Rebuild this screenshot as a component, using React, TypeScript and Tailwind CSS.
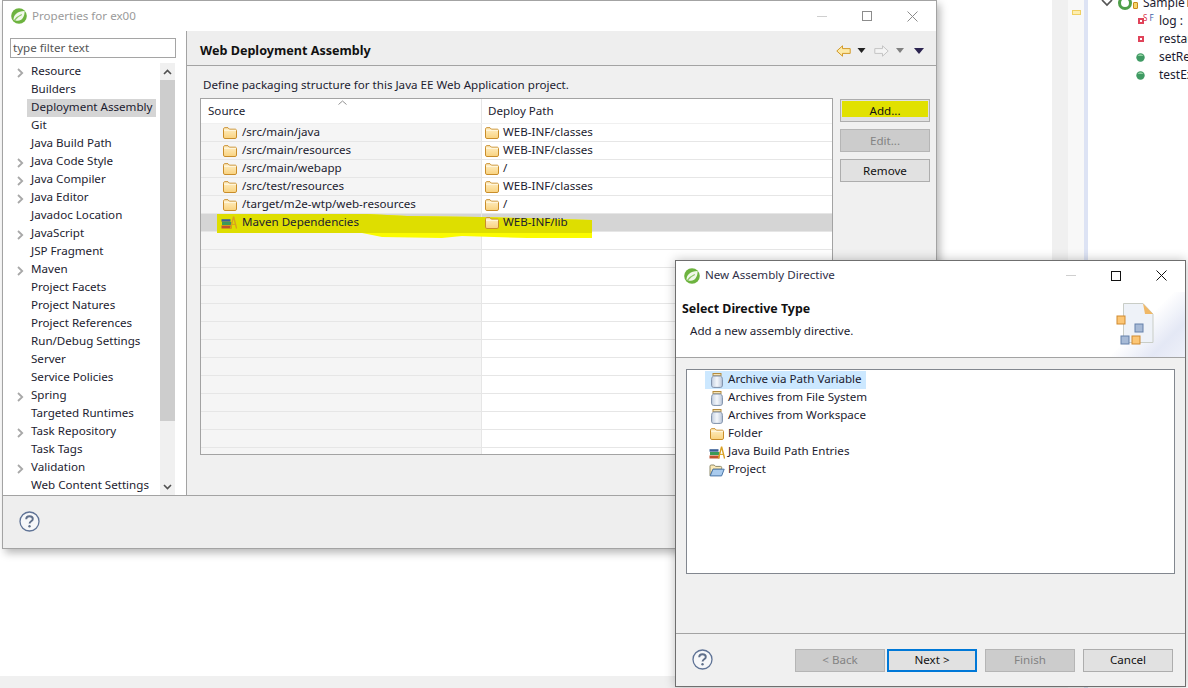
import React from "react";

const Spring = ({ size = 16 }: { size?: number }) => (
  <svg width={size} height={size} viewBox="0 0 16 16" className="shrink-0">
    <circle cx="8" cy="8" r="7.8" fill="#6db33f" />
    <path d="M2.6 12C2.2 7 6.4 3.2 13.6 3 13.8 8.8 10.8 13 6.6 12.8 5 12.7 3.8 11.8 2.6 12Z" fill="#f1f8ea" />
    <path d="M3.2 12.6C5.2 9.8 7.6 8 10.8 6.6" fill="none" stroke="#8cc665" strokeWidth="1.1" />
  </svg>
);

const Folder = () => (
  <svg width="14" height="12" viewBox="0 0 14 12" className="shrink-0">
    <defs>
      <linearGradient id="fg" x1="0" y1="0" x2="0" y2="1">
        <stop offset="0" stopColor="#fff0c8" />
        <stop offset="1" stopColor="#f9d27e" />
      </linearGradient>
    </defs>
    <path d="M.5 2.2C.5 1.2 1 .7 2 .7h3l1.4 1.5h5.6c1 0 1.5.5 1.5 1.4v6.5c0 .9-.5 1.4-1.4 1.4H1.9C1 11.5.5 11 .5 10.1Z" fill="url(#fg)" stroke="#c98d2a" />
    <path d="M1 3.3h12" stroke="#fff8e4" strokeWidth="1" />
  </svg>
);

const Jar = () => (
  <svg width="14" height="15" viewBox="0 0 14 15" className="shrink-0">
    <defs>
      <linearGradient id="jg" x1="0" y1="0" x2="1" y2="0">
        <stop offset="0" stopColor="#c3cfe0" />
        <stop offset=".5" stopColor="#f4f7fb" />
        <stop offset="1" stopColor="#b9c6da" />
      </linearGradient>
    </defs>
    <rect x="3" y=".5" width="8" height="2.4" fill="#f6e3b4" stroke="#b58b3c" />
    <path d="M3.4 3C2 4 1.6 5 1.6 6.4v5.8c0 1.4.8 2.2 2 2.2h6.8c1.2 0 2-.8 2-2.2V6.4C12.4 5 12 4 10.6 3Z" fill="url(#jg)" stroke="#7c8ea8" />
  </svg>
);

const Library = () => (
  <svg width="16" height="13" viewBox="0 0 16 13" className="shrink-0">
    <rect x=".5" y="9.5" width="10" height="3" fill="#c0522f" />
    <rect x="1" y="6" width="9.5" height="3" fill="#3b9a58" />
    <rect x=".5" y="3.2" width="9" height="2.5" fill="#3a5f96" />
    <path d="M9.5 12.5 12.6.6 15.6 12.5" fill="none" stroke="#d9a021" strokeWidth="1.4" />
    <path d="M10.6 8.4h4" stroke="#d9a021" />
  </svg>
);

const OpenFolder = () => (
  <svg width="16" height="13" viewBox="0 0 16 13" className="shrink-0">
    <path d="M1 11.5V2.2C1 1.4 1.4 1 2.2 1h3l1.3 1.4h5c.8 0 1.2.4 1.2 1.2v1.6H4L1.2 11.5Z" fill="#fbe9b7" stroke="#8f8a6a" />
    <path d="M1.2 11.9 4 5.2h11.2L12.6 11.9Z" fill="#a9cbee" stroke="#4c77a8" />
  </svg>
);

const Chevron = () => (
  <svg width="7" height="10" viewBox="0 0 7 10" className="mt-[2px] shrink-0">
    <path d="M1 1l4.2 4L1 9" fill="none" stroke="#a8a8a8" strokeWidth="1.8" />
  </svg>
);

const Help = ({ className = "" }: { className?: string }) => (
  <svg width="21" height="21" viewBox="0 0 21 21" className={`shrink-0 ${className}`}>
    <circle cx="10.5" cy="10.5" r="9.5" fill="#f6f7f9" stroke="#5f7396" strokeWidth="1.3" />
    <path d="M7.2 8.2c0-2 1.5-3 3.3-3s3.3 1 3.3 2.7c0 2.4-3.2 2.3-3.2 4.6" fill="none" stroke="#5f6f8a" strokeWidth="1.9" />
    <circle cx="10.5" cy="15.3" r="1.2" fill="#5f6f8a" />
  </svg>
);

const WinControls = ({ dark }: { dark: boolean }) => {
  const c = dark ? "#111111" : "#8c8c8c";
  return (
    <div className="flex items-center">
      <div className="h-px w-[10px] bg-[#cfcfcf]" />
      <div className={`ml-[35px] h-[10px] w-[10px] border ${dark ? "border-[#111111]" : "border-[#8c8c8c]"}`} />
      <svg width="11" height="11" viewBox="0 0 11 11" className="ml-[35px]">
        <path d="M.5.5l10 10M10.5.5l-10 10" stroke={c} strokeWidth="1" />
      </svg>
    </div>
  );
};

const Btn = ({ label, state = "normal", className = "" }: { label: string; state?: "normal" | "disabled" | "focus"; className?: string }) => (
  <div
    className={`relative flex h-[23px] w-[90px] shrink-0 items-center justify-center text-[11.6px] ${
      state === "disabled"
        ? "border border-[#b5b5b5] bg-[#cccccc] text-[#838383]"
        : state === "focus"
        ? "border-2 border-[#0078d7] bg-[#e1e1e1] text-[#111111]"
        : "border border-[#adadad] bg-[#e1e1e1] text-[#111111]"
    } ${className}`}
  >
    {label}
  </div>
);

const tree: [string, boolean][] = [
  ["Resource", true],
  ["Builders", false],
  ["Deployment Assembly", false],
  ["Git", false],
  ["Java Build Path", false],
  ["Java Code Style", true],
  ["Java Compiler", true],
  ["Java Editor", true],
  ["Javadoc Location", false],
  ["JavaScript", true],
  ["JSP Fragment", false],
  ["Maven", true],
  ["Project Facets", false],
  ["Project Natures", false],
  ["Project References", false],
  ["Run/Debug Settings", false],
  ["Server", false],
  ["Service Policies", false],
  ["Spring", true],
  ["Targeted Runtimes", false],
  ["Task Repository", true],
  ["Task Tags", false],
  ["Validation", true],
  ["Web Content Settings", false],
];

const rows: [string, string][] = [
  ["/src/main/java", "WEB-INF/classes"],
  ["/src/main/resources", "WEB-INF/classes"],
  ["/src/main/webapp", "/"],
  ["/src/test/resources", "WEB-INF/classes"],
  ["/target/m2e-wtp/web-resources", "/"],
  ["Maven Dependencies", "WEB-INF/lib"],
];

const TableRow = ({ src, dst, index }: { src?: string; dst?: string; index: number }) => {
  const selected = index === 5;
  return (
    <div className={`flex h-[18px] shrink-0 border-b border-[#e6e6e6] ${selected ? "bg-[#d5d5d5]" : ""}`}>
      <div className={`flex w-[281px] shrink-0 items-center border-r border-[#e6e6e6] pl-[22px] ${selected ? "" : "bg-[#f5f5f5]"}`}>
        {src && (
          <div className="relative z-10 flex items-center">
            {selected ? <span className="-ml-[2px] flex"><Library /></span> : <Folder />}
            <span className="ml-[5px] pb-[2px] text-[11.6px] leading-none text-[#1c1c30]">{src}</span>
          </div>
        )}
      </div>
      <div className={`flex w-[349px] items-center pl-[3px] ${selected ? "" : "bg-white"}`}>
        {dst && (
          <div className="relative z-10 flex items-center">
            <Folder />
            <span className="ml-[4px] pb-[2px] text-[11.6px] leading-none text-[#1c1c30]">{dst}</span>
          </div>
        )}
      </div>
    </div>
  );
};

const directive: [string, React.ReactNode][] = [
  ["Archive via Path Variable", <Jar />],
  ["Archives from File System", <Jar />],
  ["Archives from Workspace", <Jar />],
  ["Folder", <Folder />],
  ["Java Build Path Entries", <Library />],
  ["Project", <OpenFolder />],
];

const Dot = () => (
  <svg width="9" height="9" viewBox="0 0 9 9" className="shrink-0">
    <circle cx="4.5" cy="4.5" r="4.2" fill="#3f9a63" />
    <path d="M1.5 3a3.4 3.4 0 0 1 6 0Z" fill="#8fd0a0" />
  </svg>
);

const RedSquare = () => (
  <div className="flex h-[6px] w-[6px] shrink-0 items-center justify-center bg-[#e0445a]">
    <div className="h-[2px] w-[2px] bg-white" />
  </div>
);

export default function App() {
  return (
    <div className="relative flex h-[688px] w-[1188px] overflow-hidden bg-white text-[11.6px] [font-family:'Noto_Sans',sans-serif]">
      {/* desktop behind the dialogs */}
      <div className="flex w-[1052px] shrink-0 flex-col">
        <div className="flex-1 bg-white" />
        <div className="h-[12px] bg-[#f0f0f0]" />
      </div>
      <div className="w-[16px] shrink-0 bg-[#f0f0f0]" />
      <div className="flex w-[16px] shrink-0 justify-center bg-[#f8f8f8] pt-[10px]">
        <div className="h-[5px] w-[9px] border border-[#f0cf62] bg-[#fdeeb0]" />
      </div>
      <div className="w-[4px] shrink-0 bg-[#dde3f4]" />
      <div className="min-w-0 flex-1 overflow-hidden text-[12px] text-[#1c1c30]">
        <div className="-mt-[6px] flex h-[18px] items-center pl-[13px]">
          <svg width="12" height="8" viewBox="0 0 12 8" className="shrink-0"><path d="M1 1l5 5 5-5" fill="none" stroke="#555555" strokeWidth="1.7" /></svg>
          <div className="ml-[5px] h-[14px] w-[14px] shrink-0 rounded-full border-[3px] border-[#4f9f4a] bg-white" />
          <div className="ml-[1px] mt-[4px] h-[7px] w-[5px] shrink-0 rounded-[1px] border border-[#c78a1a] bg-[#f7d56a]" />
          <span className="ml-[5px] whitespace-nowrap">SampleT</span>
        </div>
        <div className="flex h-[18px] items-center whitespace-nowrap pl-[50px]">
          <div className="flex w-[21px] shrink-0 items-center">
            <RedSquare />
            <span className="-ml-[1px] -mt-[7px] text-[8px] leading-none text-[#d8344a]">S</span>
            <span className="-mt-[7px] ml-[2px] text-[8px] leading-none text-[#3f63a8]">F</span>
          </div>
          <span>log :</span>
        </div>
        <div className="flex h-[18px] items-center whitespace-nowrap pl-[50px]">
          <div className="w-[21px] shrink-0"><RedSquare /></div>
          <span>restau</span>
        </div>
        <div className="flex h-[18px] items-center whitespace-nowrap pl-[48px]">
          <div className="w-[23px] shrink-0"><Dot /></div>
          <span>setRe</span>
        </div>
        <div className="flex h-[18px] items-center whitespace-nowrap pl-[48px]">
          <div className="w-[23px] shrink-0"><Dot /></div>
          <span>testEx</span>
        </div>
      </div>

      {/* Properties window */}
      <div className="absolute left-[2px] top-0 flex h-[549px] w-[935px] flex-col border border-[#a3a3a3] bg-[#f0f0f0] shadow-[3px_4px_8px_rgba(0,0,0,0.28)]">
        <div className="flex h-[30px] shrink-0 items-center bg-white pl-[8px] pr-[18px]">
          <Spring />
          <span className="ml-[5px] text-[#9a9a9a]">Properties for ex00</span>
          <div className="ml-auto"><WinControls dark={false} /></div>
        </div>
        <div className="flex min-h-0 flex-1">
          <div className="flex w-[184px] shrink-0 flex-col border-r border-[#a3a3a3] bg-white">
            <div className="ml-[7px] mt-[7px] flex h-[20px] w-[166px] shrink-0 items-center border border-[#a5a5a5] px-[2px] pb-[1px] text-[#555555]">
              type filter text
            </div>
            <div className="mt-[5px] flex">
              <div className="w-[157px] shrink-0">
                {tree.map(([name, arrow]) => (
                  <div key={name} className="flex h-[18px] items-center pl-[14px]">
                    <div className="flex w-[14px] shrink-0">{arrow && <Chevron />}</div>
                    <div className={`-ml-[4px] flex h-[18px] items-center whitespace-nowrap pb-[2px] pl-[4px] text-[#1c1c30] ${name === "Deployment Assembly" ? "w-[129px] bg-[#d5d5d5]" : ""}`}>
                      {name}
                    </div>
                  </div>
                ))}
              </div>
              <div className="flex h-[432px] w-[15px] shrink-0 flex-col bg-[#f0f0f0]">
                <div className="flex h-[17px] shrink-0 items-center justify-center">
                  <svg width="9" height="6" viewBox="0 0 9 6"><path d="M1 5l3.5-3.5L8 5" fill="none" stroke="#505050" strokeWidth="1.6" /></svg>
                </div>
                <div className="h-[341px] shrink-0 bg-[#cdcdcd]" />
                <div className="flex-1" />
                <div className="flex h-[17px] shrink-0 items-center justify-center">
                  <svg width="9" height="6" viewBox="0 0 9 6"><path d="M1 1l3.5 3.5L8 1" fill="none" stroke="#505050" strokeWidth="1.6" /></svg>
                </div>
              </div>
            </div>
          </div>
          <div className="flex min-w-0 flex-1 flex-col">
            <div className="flex h-[35px] shrink-0 items-center border-b border-[#a3a3a3] bg-[#eeeeee] pl-[13px] pr-[12px] pt-[5px]">
              <span className="mt-[2px] text-[12.6px] font-bold text-[#111111]">Web Deployment Assembly</span>
              <div className="ml-auto flex items-center">
                <svg width="15" height="12" viewBox="0 0 15 12"><path d="M6.5.8.8 6l5.7 5.2V8.4h7.7V3.6H6.5Z" fill="#fdeaa8" stroke="#d29a2a" /></svg>
                <svg width="9" height="5" viewBox="0 0 9 5" className="ml-[6px]"><path d="M.5 0h8L4.5 5Z" fill="#222222" /></svg>
                <svg width="15" height="12" viewBox="0 0 15 12" className="ml-[8px]"><path d="M8.5.8 14.2 6l-5.7 5.2V8.4H.8V3.6h7.7Z" fill="#f4f4f4" stroke="#c4c4c4" /></svg>
                <svg width="8" height="5" viewBox="0 0 8 5" className="ml-[7px]"><path d="M0 0h8L4 5Z" fill="#808080" /></svg>
                <svg width="10" height="6" viewBox="0 0 10 6" className="ml-[10px]"><path d="M0 0h10L5 6Z" fill="#2c2450" /></svg>
              </div>
            </div>
            <div className="flex min-h-0 flex-1 flex-col pl-[13px]">
              <div className="flex h-[32px] shrink-0 items-center pb-[1px] pl-[3px] pt-[6px] text-[#1c1c30]">
                Define packaging structure for this Java EE Web Application project.
              </div>
              <div className="flex items-start">
                <div className="relative h-[357px] w-[633px] shrink-0 overflow-hidden border border-[#a3a3a3] bg-white">
                  <div className="flex h-[25px] border-b border-[#f0f0f0]">
                    <div className="relative flex w-[281px] items-center border-r border-[#e6e6e6] pb-[1px] pl-[7px] text-[#1c1c30]">
                      Source
                      <svg width="9" height="5" viewBox="0 0 9 5" className="absolute left-[137px] top-[1px]"><path d="M.5 4.5 4.5 1l4 3.5" fill="none" stroke="#909090" /></svg>
                    </div>
                    <div className="flex items-center pb-[1px] pl-[6px] text-[#1c1c30]">Deploy Path</div>
                  </div>
                  {Array.from({ length: 19 }).map((_, i) => (
                    <TableRow key={i} index={i} src={rows[i]?.[0]} dst={rows[i]?.[1]} />
                  ))}
                  <svg width="400" height="30" viewBox="0 0 400 30" className="absolute left-[16px] top-[112px] z-[5]">
                    <path d="M0 3H150L190 5 263 6 375 9V27L310 27 245 25 225 27 165 26 145 22H0Z" fill="#fbfb00" />
                    <path d="M0 3H150L190 5 263 6 375 9V22H0Z" fill="#dede00" />
                  </svg>
                </div>
                <div className="ml-[7px] mt-[1px] flex flex-col">
                  <div className="relative">
                    <Btn label="" />
                    <div className="absolute left-[2px] top-[2px] h-[16px] w-[86px] bg-[#e1e100]" />
                    <div className="absolute inset-0 flex items-center justify-center text-[#111111]">Add...</div>
                  </div>
                  <Btn label="Edit..." state="disabled" className="mt-[7px]" />
                  <Btn label="Remove" className="mt-[7px]" />
                </div>
              </div>
            </div>
          </div>
        </div>
        <div className="flex h-[53px] shrink-0 items-center border-t border-[#a3a3a3] bg-[#eeeeee] pb-[2px] pl-[16px]">
          <Help />
        </div>
      </div>

      {/* New Assembly Directive window */}
      <div className="absolute left-[675px] top-[260px] flex h-[427px] w-[511px] flex-col border border-[#6f6f6f] bg-[#f0f0f0] shadow-[0_0_10px_rgba(0,0,0,0.25)]">
        <div className="flex h-[31px] shrink-0 items-center bg-white pb-[2px] pl-[8px] pr-[18px]">
          <Spring />
          <span className="ml-[5px] pb-[2px] text-[#303048]">New Assembly Directive</span>
          <div className="ml-auto"><WinControls dark={true} /></div>
        </div>
        <div className="relative flex h-[66px] shrink-0 flex-col overflow-hidden border-b border-[#a3a3a3] bg-white pl-[6px]">
          <div className="absolute inset-y-0 right-0 w-[75px] bg-[linear-gradient(135deg,#ffffff_45%,#e4e8f5_75%,#eef0f9_100%)]" />
          <div className="relative mt-[8px] text-[12.4px] font-bold leading-[18px] text-[#111111]">Select Directive Type</div>
          <div className="relative ml-[8px] mt-[4px] leading-[18px] text-[#1c1c30]">Add a new assembly directive.</div>
          <svg width="40" height="46" viewBox="0 0 40 46" className="absolute right-[30px] top-[9px]">
            <path d="M8.5 2.5H28L38 13V41.5H8.5Z" fill="#eef2f8" stroke="#c9cdc6" />
            <path d="M28 2.5 38 13H30Z" fill="#f0b866" />
            <rect x="2" y="15" width="8" height="8" fill="#fcc675" stroke="#d08a30" />
            <rect x="20" y="23" width="8" height="8" fill="#a7bad6" stroke="#6580aa" />
            <rect x="6" y="35" width="8" height="8" fill="#a7bad6" stroke="#6580aa" />
            <rect x="17" y="35" width="8" height="8" fill="#fcc675" stroke="#d08a30" />
          </svg>
        </div>
        <div className="flex min-h-0 flex-1 flex-col px-[10px] pt-[11px]">
          <div className="h-[205px] shrink-0 border border-[#82878f] bg-white pl-[18px] pt-[1px]">
            {directive.map(([name, icon], i) => (
              <div key={name} className={`flex h-[18px] items-center pl-[3px] ${i === 0 ? "w-[161px] bg-[#cce8ff]" : ""}`}>
                <div className="flex w-[20px] shrink-0 justify-center pr-[3px]">{icon}</div>
                <span className="whitespace-nowrap pb-[2px] text-[#1c1c30]">{name}</span>
              </div>
            ))}
          </div>
        </div>
        <div className="flex h-[53px] shrink-0 items-center border-t border-[#a3a3a3] bg-[#f0f0f0] pl-[16px] pr-[12px]">
          <Help className="-mt-[2px]" />
          <div className="ml-auto flex">
            <Btn label="< Back" state="disabled" />
            <Btn label="Next >" state="focus" className="ml-[2px]" />
            <Btn label="Finish" state="disabled" className="ml-[8px]" />
            <Btn label="Cancel" className="ml-[8px]" />
          </div>
        </div>
      </div>
    </div>
  );
}
